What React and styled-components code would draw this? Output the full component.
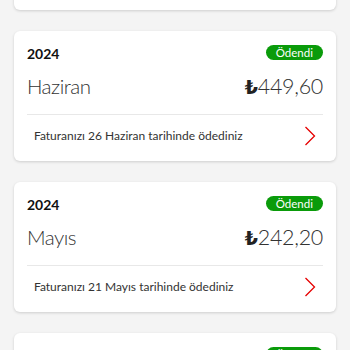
import React from 'react'
import styled, { createGlobalStyle } from 'styled-components'

const bills = [
  { year: '2024', month: 'Haziran', amount: '449,60', day: '26' },
  { year: '2024', month: 'Mayıs', amount: '242,20', day: '21' },
  { year: '2024', month: 'Nisan', amount: '238,90', day: '22' },
]

function Chevron() {
  return (
    <svg width="12" height="20" viewBox="0 0 12 20" fill="none">
      <path d="M1.5 1 L10.5 10 L1.5 19" stroke="#e60000" strokeWidth="1.3" strokeLinejoin="miter" />
    </svg>
  )
}

function BillCard({ bill }) {
  return (
    <Card>
      <Header>
        <Year>{bill.year}</Year>
        <Badge>Ödendi</Badge>
      </Header>
      <MainRow>
        <Month>{bill.month}</Month>
        <Amount>
          <Lira>₺</Lira>
          {bill.amount}
        </Amount>
      </MainRow>
      <Divider />
      <Footer>
        <Note>
          Faturanızı {bill.day} {bill.month} tarihinde ödediniz
        </Note>
        <Chevron />
      </Footer>
    </Card>
  )
}

function App() {
  return (
    <>
      <GlobalStyle />
      <Page>
        <List>
          {/* previous month, scrolled almost out of view */}
          <Card $stub />
          {bills.map((b) => (
            <BillCard key={b.month} bill={b} />
          ))}
        </List>
      </Page>
    </>
  )
}

export default App

const GlobalStyle = createGlobalStyle`
  body {
    margin: 0;
    background: #f4f4f4;
    font-family: Lato, "Open Sans", sans-serif;
    color: #222;
    overflow: hidden;
  }
`

const Page = styled.div`
  height: 350px;
  overflow: hidden;
  padding: 0 14px;
`

const List = styled.div`
  display: flex;
  flex-direction: column;
  gap: 21px;
  margin-top: -120px;
`

const Card = styled.div`
  height: 130px;
  flex-shrink: 0;
  box-sizing: border-box;
  background: #fff;
  border-radius: 6px;
  box-shadow: 0 1px 3px rgba(0, 0, 0, 0.16);
  padding: ${(p) => (p.$stub ? '0' : '13px 13px 0')};
  display: flex;
  flex-direction: column;
`

const Header = styled.div`
  display: flex;
  justify-content: space-between;
  align-items: center;
  height: 16px;
`

const Year = styled.div`
  font-size: 14px;
  font-weight: 700;
  color: #111;
  margin-top: 3px;
`

const Badge = styled.div`
  background: #0a9b0a;
  color: #fff;
  font-size: 11.5px;
  line-height: 15px;
  height: 15px;
  padding: 0 10px;
  border-radius: 8px;
`

const MainRow = styled.div`
  display: flex;
  justify-content: space-between;
  align-items: baseline;
  margin-top: 13px;
  height: 29px;
`

const Month = styled.div`
  font-size: 20.5px;
  font-weight: 300;
  letter-spacing: -0.5px;
  color: #333;
`

const Amount = styled.div`
  font-size: 21.5px;
  font-weight: 300;
  letter-spacing: -0.3px;
  color: #333;
`

const Lira = styled.span`
  font-family: "DejaVu Sans", sans-serif;
  font-weight: 700;
  color: #222;
  font-size: 19px;
`

const Divider = styled.div`
  height: 1px;
  background: #e8e8e8;
  margin-top: 12px;
`

const Footer = styled.div`
  flex: 1;
  display: flex;
  align-items: center;
  justify-content: space-between;
  padding: 0 7px 5px 7px;
`

const Note = styled.div`
  font-size: 12px;
  color: #333;
`
